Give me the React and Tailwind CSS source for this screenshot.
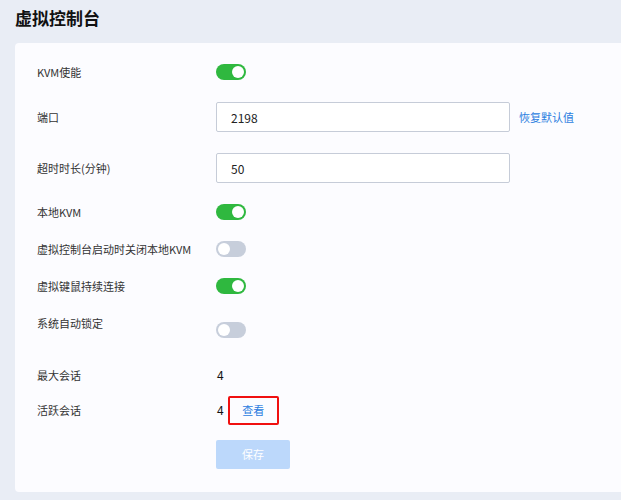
import React, { useState } from 'react';

const Toggle = ({ on, onChange, className = '' }) => (
  <button
    type="button"
    onClick={onChange}
    className={
      'relative w-[30px] h-[16px] rounded-full transition-colors ' +
      (on ? 'bg-[#2fb83f] ' : 'bg-[#c7cedb] ') +
      className
    }
  >
    <span
      className={
        'absolute top-[2px] w-[12px] h-[12px] rounded-full bg-white transition-all ' +
        (on ? 'left-[16px]' : 'left-[2px]')
      }
    />
  </button>
);

const Row = ({ label, children, className = '' }) => (
  <div className={'flex items-center h-[30px] ' + className}>
    <div className="w-[179px] shrink-0 text-[11px] text-[#333]">{label}</div>
    <div className="flex items-center">{children}</div>
  </div>
);

const App = () => {
  const [form, setForm] = useState({
    kvm: true,
    port: '2198',
    timeout: '50',
    localKvm: true,
    closeLocal: false,
    keepConn: true,
    autoLock: false
  });

  const flip = (key) => setForm({ ...form, [key]: !form[key] });

  return (
    <div
      className="min-h-screen bg-[#e9edf5] pl-[15px] pt-[6px]"
      style={{ fontFamily: '"Noto Sans CJK SC", "Noto Sans", sans-serif' }}
    >
      <h1 className="text-[17px] font-bold text-[#111] leading-[24px] mb-[13px]">
        虚拟控制台
      </h1>

      <div className="bg-[#fcfcff] rounded-l-[4px] pl-[22px] pt-[14px] pb-[23px]">
        {/* KVM */}
        <Row label="KVM使能">
          <Toggle on={form.kvm} onChange={() => flip('kvm')} />
        </Row>

        {/* Port */}
        <Row label="端口" className="mt-[15px]">
          <input
            value={form.port}
            onChange={(e) => setForm({ ...form, port: e.target.value })}
            className="w-[294px] h-[30px] px-[14px] border border-[#c6ccd8] rounded-[2px] bg-white text-[12px] text-[#222] outline-none"
          />
          <a className="ml-[9px] text-[11px] text-[#2b7de0] cursor-pointer">恢复默认值</a>
        </Row>

        {/* Timeout */}
        <Row label="超时时长(分钟)" className="mt-[21px]">
          <input
            value={form.timeout}
            onChange={(e) => setForm({ ...form, timeout: e.target.value })}
            className="w-[294px] h-[30px] px-[14px] border border-[#c6ccd8] rounded-[2px] bg-white text-[12px] text-[#222] outline-none"
          />
        </Row>

        <Row label="本地KVM" className="mt-[14px]">
          <Toggle on={form.localKvm} onChange={() => flip('localKvm')} />
        </Row>

        <Row label="虚拟控制台启动时关闭本地KVM" className="mt-[7px]">
          <Toggle on={form.closeLocal} onChange={() => flip('closeLocal')} />
        </Row>

        <Row label="虚拟键鼠持续连接" className="mt-[7px]">
          <Toggle on={form.keepConn} onChange={() => flip('keepConn')} />
        </Row>

        <Row label="系统自动锁定" className="mt-[7px]">
          <Toggle on={form.autoLock} onChange={() => flip('autoLock')} className="mt-[14px]" />
        </Row>

        {/* Sessions */}
        <Row label="最大会话" className="mt-[22px]">
          <span className="text-[12px] text-[#111] pl-[1px]">4</span>
        </Row>

        <Row label="活跃会话" className="mt-[5px]">
          <span className="text-[12px] text-[#111] pl-[1px]">4</span>
          <div className="ml-[4px] w-[51px] h-[29px] border-2 border-[#f01010] rounded-[2px] flex items-center justify-center">
            <a className="text-[11px] text-[#2b7de0] cursor-pointer">查看</a>
          </div>
        </Row>

        {/* Save */}
        <div className="mt-[15px] pl-[179px]">
          <button
            disabled
            className="w-[74px] h-[29px] bg-[#bcd8fb] rounded-[2px] text-[11px] text-white"
          >
            保存
          </button>
        </div>
      </div>
    </div>
  );
};

export default App;
